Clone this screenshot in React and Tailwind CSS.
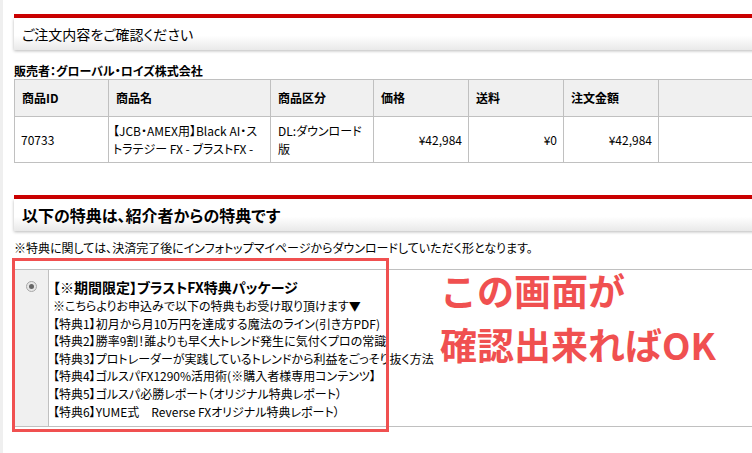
import React from "react";

const cols = [
  { label: "商品ID", w: "w-[94px]" },
  { label: "商品名", w: "w-[162px]" },
  { label: "商品区分", w: "w-[103px]" },
  { label: "価格", w: "w-[95px]" },
  { label: "送料", w: "w-[95px]" },
  { label: "注文金額", w: "w-[95px]" },
  { label: "", w: "w-[120px]" },
];

const perks = [
  "※こちらよりお申込みで以下の特典もお受け取り頂けます▼",
  "【特典1】初月から月10万円を達成する魔法のライン(引き方PDF)",
  "【特典2】勝率9割！誰よりも早く大トレンド発生に気付くプロの常識",
  "【特典3】プロトレーダーが実践しているトレンドから利益をごっそり抜く方法",
  "【特典4】ゴルスパFX1290%活用術(※購入者様専用コンテンツ】",
  "【特典5】ゴルスパ必勝レポート（オリジナル特典レポート）",
  "【特典6】YUME式　Reverse FXオリジナル特典レポート）",
];

const SectionHead = ({ children, className = "" }) => (
  <div className="border-t-4 border-[#cc0000]">
    <div
      className={`h-[32px] flex items-center pl-2 bg-linear-to-b from-white from-55% to-[#e9e9e9] shadow-[0_1px_3px_rgba(0,0,0,0.28)] ${className}`}
    >
      {children}
    </div>
  </div>
);

const App = () => {
  return (
    <div className="relative w-[752px] h-[453px] overflow-hidden bg-white text-black border-l-[3px] border-[#efefef] font-['Noto_Sans_CJK_JP',sans-serif] [font-feature-settings:'palt']">
      <div className="w-[800px] pl-[11px] pt-[14px]">
        <SectionHead className="text-[14px]">ご注文内容をご確認ください</SectionHead>

        <p className="mt-[13px] text-[12px] leading-[16px] font-bold">販売者：グローバル・ロイズ株式会社</p>

        <table className="w-[764px] table-fixed border-collapse text-[12px] leading-[18px]">
          <thead>
            <tr className="h-[37px] bg-[#f0f0f0]">
              {cols.map((c, i) => (
                <th key={i} className={`${c.w} border border-[#c0c0c0] text-left font-bold pl-[7px]`}>
                  {c.label}
                </th>
              ))}
            </tr>
          </thead>
          <tbody>
            <tr className="h-[46px]">
              <td className="border border-[#c0c0c0] pl-[6px]">70733</td>
              <td className="border border-[#c0c0c0] pl-[4px] whitespace-nowrap">
                【JCB・AMEX用】Black AI・ス
                <br />
                トラテジー FX - ブラストFX -
              </td>
              <td className="border border-[#c0c0c0] pl-[7px] whitespace-nowrap">
                DL:ダウンロード
                <br />
                版
              </td>
              <td className="border border-[#c0c0c0] text-right pr-[6px]">¥42,984</td>
              <td className="border border-[#c0c0c0] text-right pr-[6px]">¥0</td>
              <td className="border border-[#c0c0c0] text-right pr-[6px]">¥42,984</td>
              <td className="border border-[#c0c0c0]"></td>
            </tr>
          </tbody>
        </table>

        <div className="mt-[32px]">
          <SectionHead className="text-[16px] font-bold">以下の特典は、紹介者からの特典です</SectionHead>
        </div>

        <p className="mt-[9px] text-[12px] leading-[16px]">
          ※特典に関しては、決済完了後にインフォトップマイページからダウンロードしていただく形となります。
        </p>

        <div className="mt-[13px] flex border-y border-[#c0c0c0]">
          <div className="w-[35px] shrink-0 bg-[#f0f0f0] border-r border-[#c0c0c0] flex justify-center pt-[11px]">
            <span className="w-[11px] h-[11px] rounded-full border border-[#a8a8a8] bg-[#e6e6e6] flex items-center justify-center">
              <span className="w-[5px] h-[5px] rounded-full bg-[#666]"></span>
            </span>
          </div>
          <div className="pl-[4px] pt-[7px] pb-[6px]">
            <p className="text-[14px] leading-[20px] font-bold">【※期間限定】ブラストFX特典パッケージ</p>
            {perks.map((t, i) => (
              <p key={i} className="text-[12px] leading-[17.6px] whitespace-nowrap">
                {t}
              </p>
            ))}
          </div>
        </div>
      </div>

      <div className="absolute left-[9px] top-[258px] w-[377px] h-[174px] border-[3px] border-[#f05050] pointer-events-none"></div>

      <div className="absolute left-[437px] top-[263px] text-[37px] leading-[54px] font-bold text-[#f05050] [font-feature-settings:normal] whitespace-nowrap">
        <p>この画面が</p>
        <p>確認出来ればOK</p>
      </div>
    </div>
  );
};

export default App;
